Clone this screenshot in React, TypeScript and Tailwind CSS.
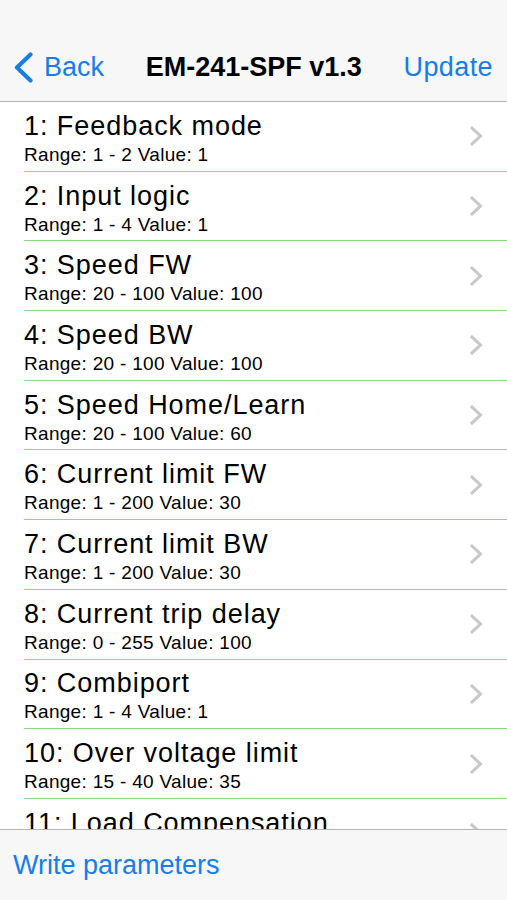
import React from "react";

const rows: [string, string][] = [
  ["1: Feedback mode", "Range: 1 - 2 Value: 1"],
  ["2: Input logic", "Range: 1 - 4 Value: 1"],
  ["3: Speed FW", "Range: 20 - 100 Value: 100"],
  ["4: Speed BW", "Range: 20 - 100 Value: 100"],
  ["5: Speed Home/Learn", "Range: 20 - 100 Value: 60"],
  ["6: Current limit FW", "Range: 1 - 200 Value: 30"],
  ["7: Current limit BW", "Range: 1 - 200 Value: 30"],
  ["8: Current trip delay", "Range: 0 - 255 Value: 100"],
  ["9: Combiport", "Range: 1 - 4 Value: 1"],
  ["10: Over voltage limit", "Range: 15 - 40 Value: 35"],
  ["11: Load Compensation", ""],
];

function Chevron() {
  return (
    <svg width="13" height="20" viewBox="0 0 13 20" className="shrink-0">
      <path d="M2 2 L10.5 10 L2 18" fill="none" stroke="#c7c7cc" strokeWidth="3" strokeLinecap="square" />
    </svg>
  );
}

export default function App() {
  return (
    <div
      className="w-[507px] h-[900px] flex flex-col bg-white overflow-hidden"
      style={{ fontFamily: '"Liberation Sans", Arial, sans-serif' }}
    >
      <header className="h-[102px] shrink-0 bg-[#f7f7f8] border-b border-[#b4b4b6] flex items-end pb-[18px]">
        <div className="flex items-center w-full h-[32px]">
          <div className="flex items-center pl-[13px] gap-[10px] text-[#157ee8] text-[27px] leading-[27px]">
            <svg width="21" height="31" viewBox="0 0 21 31">
              <path d="M17.5 2.5 L4 15.5 L17.5 28.5" fill="none" stroke="#157ee8" strokeWidth="4.2" strokeLinecap="round" strokeLinejoin="round" />
            </svg>
            <span>Back</span>
          </div>
          <div className="flex-1 text-center text-[27px] leading-[27px] font-bold text-black">
            EM-241-SPF v1.3
          </div>
          <div className="pr-[14px] text-[#157ee8] text-[27px] leading-[27px] tracking-[0.4px]">Update</div>
        </div>
      </header>
      <div className="flex-1 overflow-hidden">
        {rows.map(([t, s]) => (
          <div key={t} className="h-[69.7px] pl-6 flex">
            <div className="flex-1 flex items-center border-b border-[#88d888] pr-6">
              <div className="flex-1 pt-[4px]">
                <div className="text-[27px] leading-[27px] text-black tracking-[0.95px]">{t}</div>
                {s ? (
                  <div className="mt-[5px] text-[19px] leading-[19px] text-black tracking-[0.3px]">{s}</div>
                ) : (
                  <div className="mt-[5px] h-[19px]" />
                )}
              </div>
              <Chevron />
            </div>
          </div>
        ))}
      </div>
      <footer className="h-[71px] shrink-0 bg-[#f7f7f8] border-t border-[#b4b4b6] flex items-center pl-[13px]">
        <span className="text-[#157ee8] text-[27px] leading-[27px]">Write parameters</span>
      </footer>
    </div>
  );
}
